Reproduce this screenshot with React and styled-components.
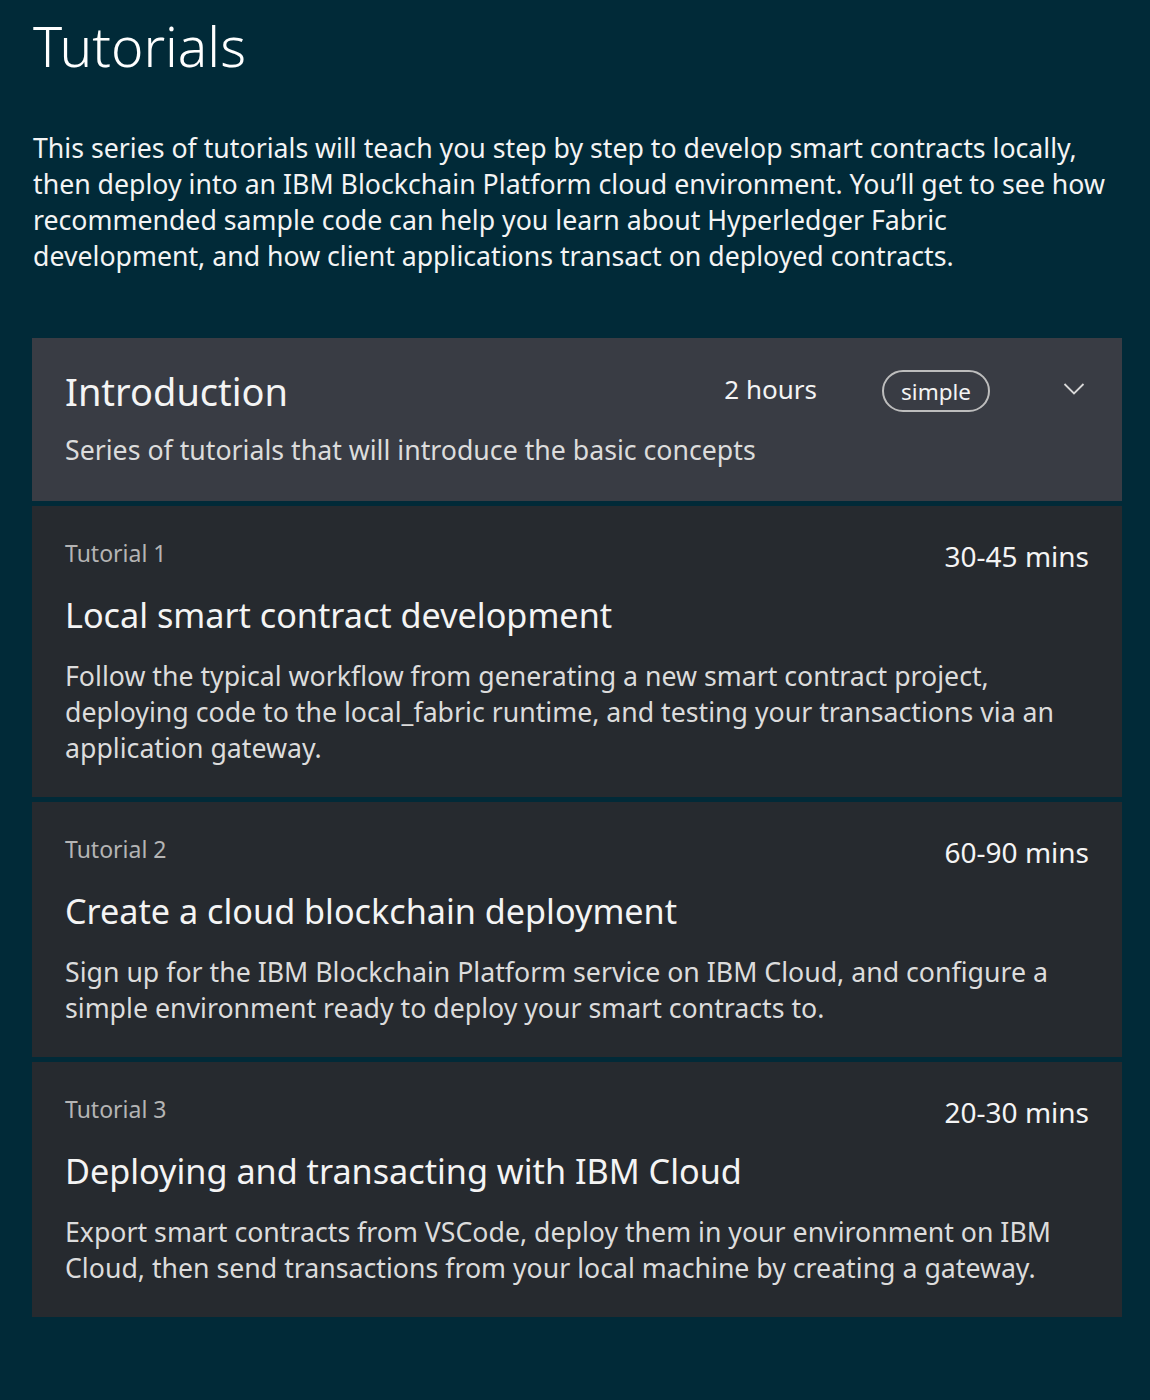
import React from "react";
import styled, { createGlobalStyle } from "styled-components";

const GlobalStyle = createGlobalStyle`
  html, body {
    margin: 0;
    padding: 0;
    background: #012a38;
  }
  body {
    font-family: "Noto Sans", "Open Sans", sans-serif;
    color: #f4f4f4;
  }
`;

const tutorials = [
    {
        label: "Tutorial 1",
        time: "30-45 mins",
        title: "Local smart contract development",
        text: "Follow the typical workflow from generating a new smart contract project, deploying code to the local_fabric runtime, and testing your transactions via an application gateway.",
    },
    {
        label: "Tutorial 2",
        time: "60-90 mins",
        title: "Create a cloud blockchain deployment",
        text: "Sign up for the IBM Blockchain Platform service on IBM Cloud, and configure a simple environment ready to deploy your smart contracts to.",
    },
    {
        label: "Tutorial 3",
        time: "20-30 mins",
        title: "Deploying and transacting with IBM Cloud",
        text: "Export smart contracts from VSCode, deploy them in your environment on IBM Cloud, then send transactions from your local machine by creating a gateway.",
    },
];

const Chevron = () => (
    <svg width="22" height="14" viewBox="0 0 22 14" fill="none">
        <path d="M1.5 2 L11 11.5 L20.5 2" stroke="#d8d8d8" strokeWidth="1.8" />
    </svg>
);

const App = () => (
    <Page>
        <GlobalStyle />
        <Title>Tutorials</Title>
        <Intro>
            This series of tutorials will teach you step by step to develop smart contracts locally,
            then deploy into an IBM Blockchain Platform cloud environment. You’ll get to see how
            recommended sample code can help you learn about Hyperledger Fabric development, and how
            client applications transact on deployed contracts.
        </Intro>
        <Series>
            <SeriesHeader>
                <HeaderRow>
                    <SeriesName>Introduction</SeriesName>
                    <Hours>2 hours</Hours>
                    <Pill>simple</Pill>
                    <Toggle>
                        <Chevron />
                    </Toggle>
                </HeaderRow>
                <SeriesText>Series of tutorials that will introduce the basic concepts</SeriesText>
            </SeriesHeader>
            {tutorials.map((t) => (
                <Card key={t.label}>
                    <CardTop>
                        <Label>{t.label}</Label>
                        <Time>{t.time}</Time>
                    </CardTop>
                    <CardTitle>{t.title}</CardTitle>
                    <CardText>{t.text}</CardText>
                </Card>
            ))}
        </Series>
    </Page>
);

export default App;

const Page = styled.div`
    padding: 14px 28px 80px 32px;
    min-height: 1400px;
    box-sizing: border-box;
`;

const Title = styled.h1`
    margin: 0 0 0 1px;
    font-size: 55px;
    font-weight: 300;
    line-height: 64px;
    color: #ffffff;
`;

const Intro = styled.p`
    margin: 52px 0 64px 1px;
    font-size: 26.7px;
    line-height: 36px;
    color: #f4f4f4;
    max-width: 1080px;
`;

const Series = styled.section`
    display: flex;
    flex-direction: column;
    gap: 5px;
    width: 1090px;
`;

const SeriesHeader = styled.div`
    background: #393c44;
    padding: 30px 33px 0 33px;
    height: 163px;
    box-sizing: border-box;
`;

const HeaderRow = styled.div`
    display: flex;
    align-items: center;
`;

const SeriesName = styled.h2`
    flex: 1;
    margin: 0;
    font-size: 38px;
    font-weight: 400;
    line-height: 46px;
    color: #f4f4f4;
`;

const Hours = styled.span`
    font-size: 26px;
    color: #f4f4f4;
    margin-right: 65px;
    margin-top: -5px;
`;

const Pill = styled.span`
    display: inline-flex;
    align-items: center;
    height: 42px;
    padding: 0 17px;
    box-sizing: border-box;
    border: 2px solid #bdbdbd;
    border-radius: 21px;
    font-size: 22.5px;
    color: #f4f4f4;
`;

const Toggle = styled.span`
    display: flex;
    margin-left: 73px;
    margin-right: 4px;
    margin-top: -4px;
`;

const SeriesText = styled.p`
    margin: 18px 0 0;
    font-size: 26.7px;
    line-height: 36px;
    color: #dcdcdc;
`;

const Card = styled.article`
    background: #262a2f;
    padding: 34px 33px 31px 33px;
`;

const CardTop = styled.div`
    display: flex;
    justify-content: space-between;
    align-items: flex-start;
    height: 32px;
`;

const Label = styled.span`
    font-size: 23px;
    line-height: 26px;
    color: #b4b4b4;
`;

const Time = styled.span`
    font-size: 28px;
    line-height: 32px;
    color: #f4f4f4;
`;

const CardTitle = styled.h3`
    margin: 21px 0;
    font-size: 34.2px;
    font-weight: 400;
    line-height: 44px;
    color: #f4f4f4;
`;

const CardText = styled.p`
    margin: 0;
    font-size: 26.7px;
    line-height: 36px;
    color: #dcdcdc;
`;
